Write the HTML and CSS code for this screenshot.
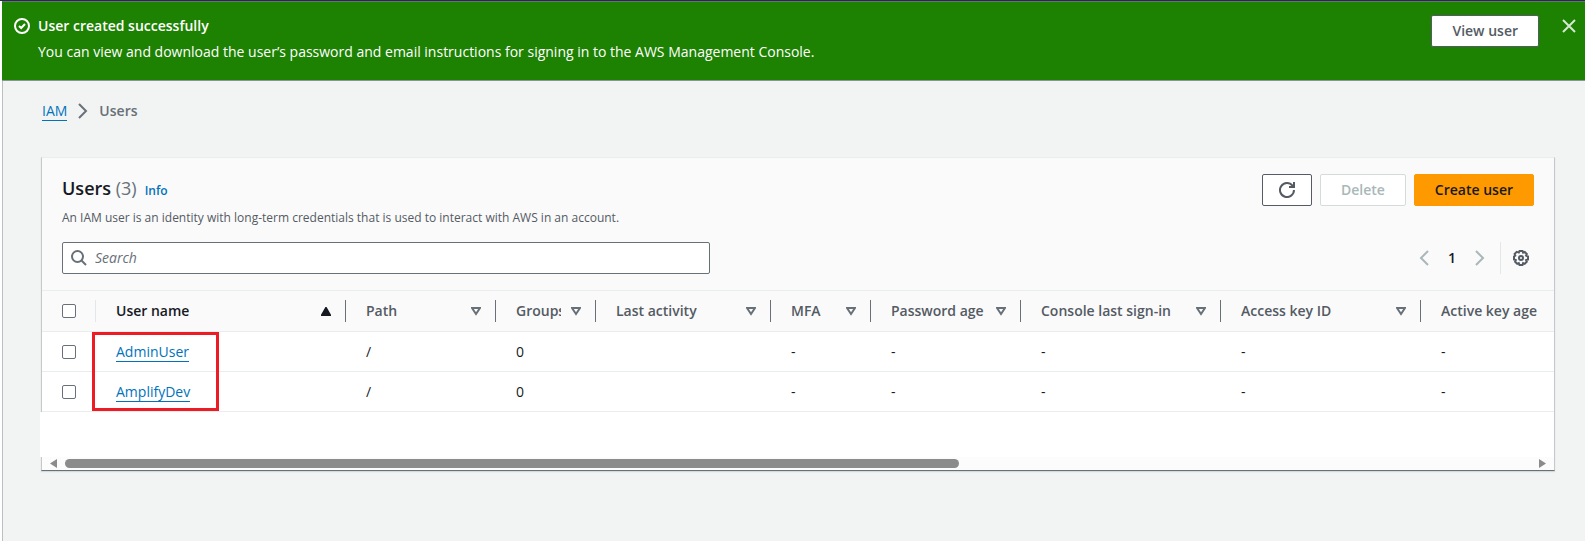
FILE: index.html
```
<!DOCTYPE html>
<html lang="en">
<head>
<meta charset="utf-8">
<title>Users | IAM</title>
<link rel="stylesheet" href="styles.css">
</head>
<body>
<div class="flash" role="status">
  <svg class="icon" viewBox="0 0 16 16"><circle cx="8" cy="8" r="7"/><path d="M5 8l2.200 2L11 6"/></svg>
  <div class="flash-text">
    <strong>User created successfully</strong>
    <p>You can view and download the user’s password and email instructions for signing in to the AWS Management Console.</p>
  </div>
  <button class="btn flash-btn" type="button">View user</button>
  <button class="icon-btn flash-close" type="button" aria-label="Dismiss"><svg class="icon" viewBox="0 0 16 16"><path d="M2 2l12 12M14 2L2 14"/></svg></button>
</div>
<main class="content">
  <nav class="crumbs" aria-label="Breadcrumbs">
    <a class="link" href="#">IAM</a>
    <svg class="icon" viewBox="0 0 16 16"><path d="M4 1l7 7-7 7"/></svg>
    <span>Users</span>
  </nav>
  <section class="panel">
    <header class="panel-head">
      <div class="row heading">
        <div class="title">
          <h1>Users <span class="count">(3)</span></h1>
          <a class="info" href="#">Info</a>
        </div>
        <div class="actions">
          <button class="btn refresh" type="button" aria-label="Refresh"><svg class="icon" viewBox="0 0 16 16"><path d="M10 5h5V0"/><path d="M15 8a7 7 0 1 1-1.500-4.300L15 5"/></svg></button>
          <button class="btn" type="button" disabled>Delete</button>
          <button class="btn primary" type="button">Create user</button>
        </div>
      </div>
      <p class="desc">An IAM user is an identity with long-term credentials that is used to interact with AWS in an account.</p>
      <div class="row tools">
        <label class="search">
          <svg class="icon" viewBox="0 0 16 16"><circle cx="6.500" cy="6.500" r="5.500"/><path d="M10.500 10.500l4.500 4.500"/></svg>
          <input type="search" placeholder="Search" aria-label="Search">
        </label>
        <div class="pager">
          <button class="icon-btn faded" type="button" aria-label="Previous page"><svg class="icon" viewBox="0 0 16 16"><path d="M12 1L5 8l7 7"/></svg></button>
          <button class="icon-btn page" type="button">1</button>
          <button class="icon-btn faded" type="button" aria-label="Next page"><svg class="icon" viewBox="0 0 16 16"><path d="M4 1l7 7-7 7"/></svg></button>
          <span class="divider"></span>
          <button class="icon-btn gear" type="button" aria-label="Preferences"><svg class="icon" viewBox="0 0 16 16"><path d="M6.500 1h3l.6 1.600 1.600-.7 2.100 2.100-.7 1.600 1.900.9v3l-1.900.6.7 1.700-2.100 2.100-1.600-.7-.6 1.800h-3l-.7-1.800-1.600.7-2.100-2.100.7-1.700L1 9.500v-3l1.300-.9-.7-1.600 2.100-2.100 2.100.7z"/><circle cx="8" cy="8" r="2"/></svg></button>
        </div>
      </div>
    </header>
    <div class="table-wrap">
      <table>
        <colgroup><col class="w-check"><col class="w-250"><col class="w-150"><col class="w-100"><col class="w-175"><col class="w-100"><col class="w-150"><col class="w-200"><col class="w-200"><col class="w-200"></colgroup>
        <thead>
          <tr>
            <th class="check"><input type="checkbox" aria-label="Select all users"></th>
            <th class="sorted"><div class="th"><span>User name</span><svg class="sort" viewBox="0 0 10 9"><path d="M5 1l4 7H1z"/></svg></div></th>
            <th><div class="th"><span>Path</span><svg class="sort" viewBox="0 0 10 9"><path d="M1 1h8L5 7z"/></svg></div></th>
            <th><div class="th"><span>Groups</span><svg class="sort" viewBox="0 0 10 9"><path d="M1 1h8L5 7z"/></svg></div></th>
            <th><div class="th"><span>Last activity</span><svg class="sort" viewBox="0 0 10 9"><path d="M1 1h8L5 7z"/></svg></div></th>
            <th><div class="th"><span>MFA</span><svg class="sort" viewBox="0 0 10 9"><path d="M1 1h8L5 7z"/></svg></div></th>
            <th><div class="th"><span>Password age</span><svg class="sort" viewBox="0 0 10 9"><path d="M1 1h8L5 7z"/></svg></div></th>
            <th><div class="th"><span>Console last sign-in</span><svg class="sort" viewBox="0 0 10 9"><path d="M1 1h8L5 7z"/></svg></div></th>
            <th><div class="th"><span>Access key ID</span><svg class="sort" viewBox="0 0 10 9"><path d="M1 1h8L5 7z"/></svg></div></th>
            <th><div class="th"><span>Active key age</span></div></th>
          </tr>
        </thead>
        <tbody>
          <tr>
            <td class="check"><input type="checkbox" aria-label="Select AdminUser"></td>
            <td><a class="link" href="#">AdminUser</a></td><td>/</td><td>0</td><td></td><td>-</td><td>-</td><td>-</td><td>-</td><td>-</td>
          </tr>
          <tr>
            <td class="check"><input type="checkbox" aria-label="Select AmplifyDev"></td>
            <td><a class="link" href="#">AmplifyDev</a></td><td>/</td><td>0</td><td></td><td>-</td><td>-</td><td>-</td><td>-</td><td>-</td>
          </tr>
        </tbody>
      </table>
      <div class="highlight"></div>
    </div>
    <div class="blank"></div>
    <div class="scrollbar">
      <svg class="arrow" viewBox="0 0 8 9"><path d="M7 0v9L0 4.500z"/></svg>
      <div class="track"><div class="thumb"></div></div>
      <svg class="arrow" viewBox="0 0 8 9"><path d="M1 0v9l7-4.500z"/></svg>
    </div>
  </section>
</main>
</body>
</html>
```
FILE: styles.css
```
* { box-sizing: border-box; }
body {
  margin: 0;
  min-height: 100vh;
  display: flex;
  flex-direction: column;
  padding-left: 2px;
  border-top: 1px solid #232f3e;
  background: #fff;
  color: #16191f;
  font: 14px/22px "Open Sans", "Noto Sans", sans-serif;
  overflow-x: hidden;
}
p, h1 { margin: 0; }
button, input { font: inherit; color: inherit; }
strong { font-weight: 600; }
.icon {
  display: block;
  flex: none;
  width: 16px;
  height: 16px;
  fill: none;
  stroke: currentColor;
  stroke-width: 2;
}
.link { color: #0073bb; text-decoration: none; border-bottom: 1px solid #0073bb; display: inline-block; line-height: 18px; }

.flash {
  display: flex;
  align-items: flex-start;
  gap: 8px;
  padding: 13px 8px 17px 12px;
  background: #1d8102;
  border-top: 1px solid #687078;
  border-bottom: 1px solid #879596;
  color: #fff;
}
.flash > .icon { margin-top: 3px; }
.flash-text { flex: 1; display: flex; flex-direction: column; gap: 4px; }
.flash .flash-close { margin: 3px 0 0 14px; color: #d5e8d0; }

.btn {
  height: 32px;
  padding: 0 20px;
  border: 1px solid #545b64;
  border-radius: 2px;
  background: #fff;
  color: #545b64;
  font-weight: 600;
  line-height: 20px;
  white-space: nowrap;
}
.btn:disabled { border-color: #d5dbdb; color: #aab7b8; }
.btn.primary { background: #ff9900; border-color: #ff9900; color: #16191f; }
.btn.refresh { padding: 0 16px; }
.icon-btn { display: block; padding: 0; border: 0; background: none; color: #545b64; }
.icon-btn.faded { color: #aab7b8; }

.content {
  flex: 1;
  padding: 19px 30px 40px 38px;
  border-left: 1px solid #b8c0c2;
  background: #f2f3f3;
}
.crumbs { display: flex; align-items: center; gap: 8px; margin-bottom: 35px; padding-left: 1px; font-weight: 600; color: #687078; }
.crumbs .link { font-weight: 400; }

.panel {
  background: #fff;
  border: 1px solid #c4cacb;
  border-top-color: #eaeded;
  border-bottom: 1px solid #687078;
  box-shadow: 0 1px 1px #d5dbdb;
}
.panel-head { padding: 16px 20px; background: #fafafa; border-bottom: 1px solid #eaeded; }
.row { display: flex; justify-content: space-between; align-items: center; }
.heading { align-items: flex-start; }
.title { display: flex; align-items: baseline; gap: 8px; }
h1 { font-size: 18px; line-height: 28px; font-weight: 600; }
.count { font-weight: 400; color: #687078; }
.info { font-size: 12px; font-weight: 600; color: #0073bb; text-decoration: none; }
.actions { display: flex; gap: 8px; }
.desc { margin: 2px 0 14px; font-size: 12px; line-height: 20px; color: #545b64; }
.search {
  display: flex;
  align-items: center;
  gap: 8px;
  width: 44%;
  height: 32px;
  padding: 0 8px;
  border: 1px solid #687078;
  border-radius: 2px;
  background: #fff;
  color: #687078;
}
.search input { flex: 1; min-width: 0; padding: 0; border: 0; outline: 0; background: none; }
.search input::placeholder { color: #687078; font-style: italic; opacity: 1; }
.pager { display: flex; align-items: center; gap: 12px; }
.page { width: 16px; font-weight: 600; color: #16191f; }
.divider { width: 1px; height: 32px; background: #e3e7e7; }
.gear { padding-right: 5px; }

.table-wrap { position: relative; overflow: hidden; }
table { width: 1579px; table-layout: fixed; border-collapse: separate; border-spacing: 0; }
.w-check { width: 54px; }
.w-100 { width: 100px; }
.w-150 { width: 150px; }
.w-175 { width: 175px; }
.w-200 { width: 200px; }
.w-250 { width: 250px; }
th, td { height: 40px; padding: 0 0 0 20px; text-align: left; border-bottom: 1px solid #eaeded; white-space: nowrap; }
th { height: 41px; background: #fafafa; color: #545b64; font-weight: 600; padding-left: 0; }
th.check { background: linear-gradient(#e3e7e7, #e3e7e7) right center / 1px 22px no-repeat #fafafa; }
th.sorted { color: #16191f; }
.check { padding-left: 20px; }
.th {
  display: flex;
  align-items: center;
  justify-content: space-between;
  gap: 10px;
  padding: 0 14px 0 20px;
  border-right: 1px solid #687078;
}
.th span { overflow: hidden; }
th:last-child .th { border-right: 0; }
.sort { flex: none; width: 10px; height: 9px; fill: none; stroke: #687078; stroke-width: 2; }
.sorted .sort { fill: #16191f; stroke: #16191f; }
input[type="checkbox"] {
  appearance: none;
  display: block;
  width: 14px;
  height: 14px;
  margin: 0;
  border: 1px solid #687078;
  border-radius: 2px;
  background: #fff;
}
/* frame laid over the user name links */
.highlight {
  position: absolute;
  left: 50px;
  top: 41px;
  width: 127px;
  height: 79px;
  border: 3px solid #ed1c24;
}
.blank { height: 45px; margin-left: -2px; background: #fff; }
.scrollbar { display: flex; align-items: center; gap: 7px; height: 13px; padding: 0 8px; background: #fcfcfc; }
.arrow { flex: none; width: 8px; height: 9px; fill: #8b8b8b; }
.track { flex: 1; }
.thumb { width: 61%; height: 9px; border-radius: 5px; background: #8b8b8b; }
```
